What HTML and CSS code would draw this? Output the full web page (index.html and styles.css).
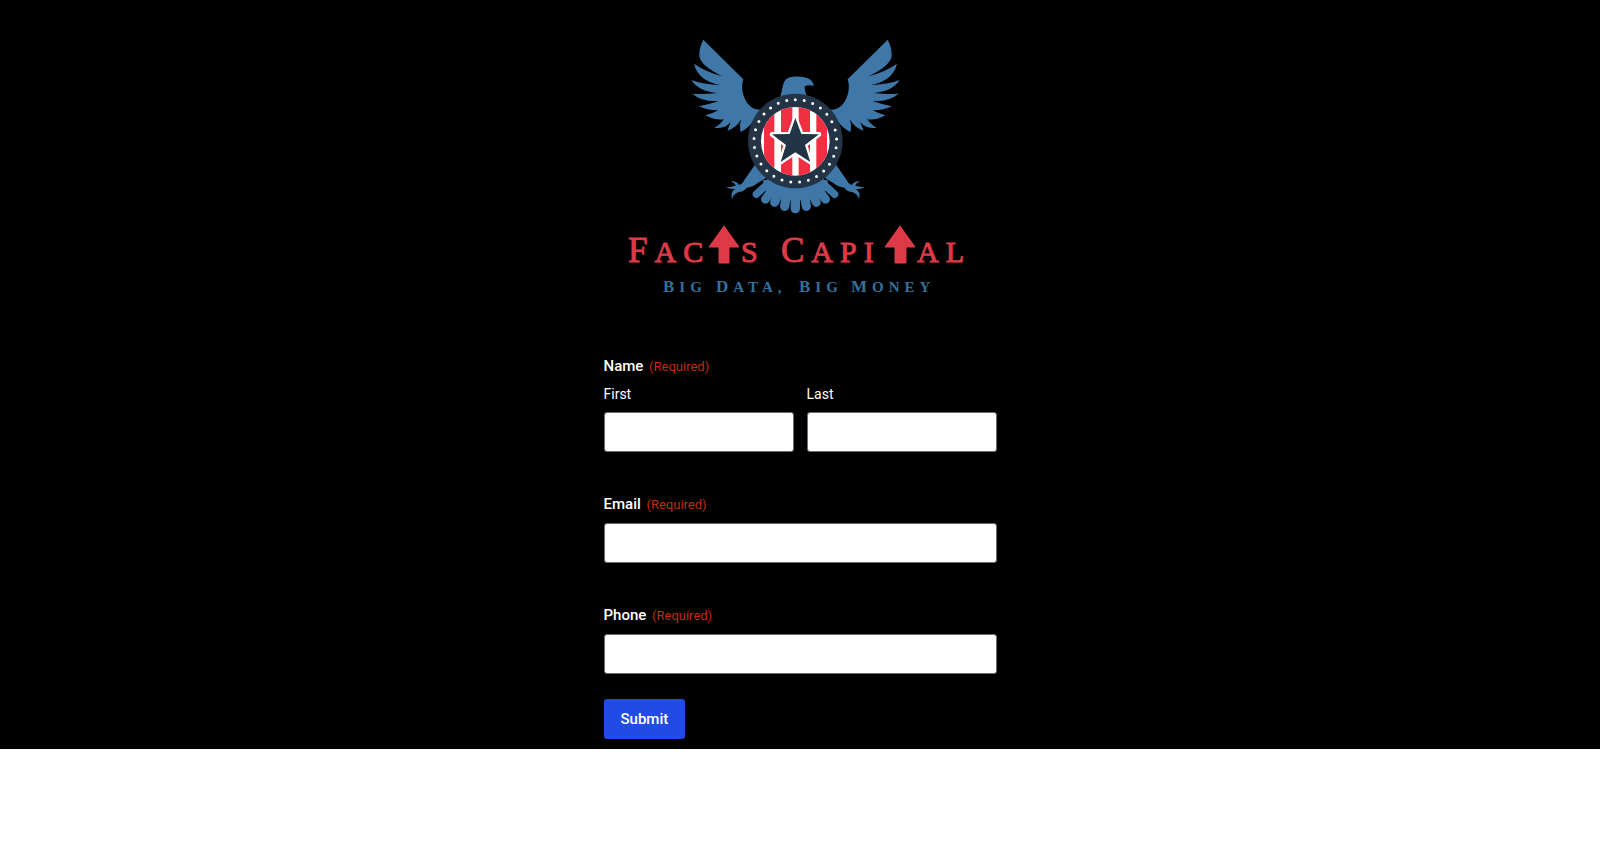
FILE: index.html
```html
<!DOCTYPE html>
<html lang="en">
<head>
<meta charset="utf-8">
<meta name="viewport" content="width=device-width, initial-scale=1">
<title>Facts Capital</title>
<link rel="stylesheet" href="styles.css">
</head>
<body>
<main class="signup">
  <div class="column">
    <svg class="logo" viewBox="604 32 393 268" role="img" aria-label="Facts Capital: Big Data, Big Money">
      <defs>
        <g id="half">
          <path d="M70 29 L190 148 C185 162 185 180 190 194 C197 216 212 240 243 239 L215 280 Q200 298 181 306 Q178 285 183 268 Q172 292 142 302 Q147 290 152 276 Q135 298 103 293 Q121 284 131 268 Q105 272 76 256 Q98 251 115 241 Q85 242 57 229 Q85 224 115 213 Q66 216 37 191 Q75 193 113 189 Q55 184 34 150 Q70 164 120 165 Q54 152 42 101 Q80 127 128 139 Q58 106 58 75 Q58 50 70 29Z"/>
          <path d="M228 400 L193 450 Q188 462 177 465 Q170 452 152 454 Q165 459 167 467 Q154 471 138 472 Q152 479 167 477 Q150 484 156 507 Q160 492 176 486 Q190 486 200 473 Q222 470 232 460 L264 440Z"/>
          <path d="M250 450 L250 476 L274 496 L302 508 L347 512 V450Z"/>
          <g fill="none" stroke="#3f78a8" stroke-linecap="round">
            <path stroke-width="22" d="M278 448 L229 493"/>
            <path stroke-width="26" d="M296 455 L256 508"/>
            <path stroke-width="27" d="M308 460 L284 517"/>
            <path stroke-width="28" d="M325 460 L314 529"/>
          </g>
        </g>
      </defs>
      <g transform="translate(680 30) scale(.3333)" fill="#3f78a8">
        <use href="#half"/>
        <use href="#half" transform="translate(693) scale(-1 1)"/>
        <path d="M346 460 V536" stroke="#3f78a8" stroke-width="28" stroke-linecap="round"/>
        <path d="M300 205 L310 162 Q314 143 338 140 Q372 137 388 147 Q401 156 401 168 Q386 163 374 169 Q373 184 384 205Z"/>
        <circle cx="346" cy="333" r="142" fill="#243447"/>
        <circle cx="346" cy="333" r="124" fill="none" stroke="#fff" stroke-width="9" stroke-linecap="round" pathLength="29" stroke-dasharray="0 1" transform="rotate(-90 346 333)"/>
        <clipPath id="disc"><circle cx="346" cy="334" r="103"/></clipPath>
        <g clip-path="url(#disc)">
          <path fill="#fff" d="M240 228h212v212H240z"/>
          <path fill="#f12f42" d="M252 228h31v212h-31zM303 228h34v212h-34zM356 228h34v212h-34zM409 228h32v212h-32z"/>
        </g>
        <path fill="#243447" stroke="#fff" stroke-width="14" stroke-linejoin="round" paint-order="stroke" d="M346 264 L364 312 L417 313 L375 345 L391 396 L346 367 L302 396 L318 345 L276 313 L329 312Z"/>
      </g>
      <g class="wordmark">
        <text x="628" y="262">F<tspan class="cap">ac</tspan></text>
        <text x="741" y="262" class="cap">s</text>
        <text x="781" y="262">C<tspan class="cap">api</tspan></text>
        <text x="917" y="262" class="cap">al</text>
        <path d="M724 226 L739 247 H729 V263 H719 V247 H709Z"/>
        <path d="M900 226 L915 247 H906 V263 H895 V247 H885Z"/>
      </g>
      <g class="tagline">
        <text x="663" y="292">B<tspan class="cap">ig</tspan></text>
        <text x="716" y="292">D<tspan class="cap">ata,</tspan></text>
        <text x="799" y="292">B<tspan class="cap">ig</tspan></text>
        <text x="851" y="292">M<tspan class="cap">oney</tspan></text>
      </g>
    </svg>
    <form class="form">
      <fieldset class="field">
        <legend class="label">Name <span class="required">(Required)</span></legend>
        <div class="pair">
          <div class="part"><label class="sublabel" for="first">First</label><input class="input" id="first" type="text" required></div>
          <div class="part"><label class="sublabel" for="last">Last</label><input class="input" id="last" type="text" required></div>
        </div>
      </fieldset>
      <div class="field">
        <label class="label" for="email">Email <span class="required">(Required)</span></label>
        <input class="input" id="email" type="email" required>
      </div>
      <div class="field">
        <label class="label" for="phone">Phone <span class="required">(Required)</span></label>
        <input class="input" id="phone" type="tel" required>
      </div>
      <button class="submit" type="submit">Submit</button>
    </form>
  </div>
</main>
</body>
</html>
```
FILE: styles.css
```css
* { box-sizing: border-box; }

body {
  margin: 0;
  background: #fff;
  color: #fff;
  font-family: Roboto, "Liberation Sans", sans-serif;
}

.signup {
  display: flex;
  justify-content: center;
  padding: 32px 16px 10px;
  background: #000;
}

.column {
  width: 100%;
  max-width: 393px;
}

.logo {
  display: block;
  width: 100%;
}

.wordmark,
.tagline {
  font-family: "Liberation Serif", serif;
  text-transform: uppercase;
}

.wordmark {
  fill: #dc3a46;
  stroke: #dc3a46;
  stroke-width: 1px;
  font-size: 35px;
  letter-spacing: 7px;
}

.wordmark .cap { font-size: 30px; }

.tagline {
  fill: #33709f;
  font-size: 17px;
  font-weight: 700;
  letter-spacing: 5px;
}

.tagline .cap { font-size: 15px; }

.form { padding-top: 55px; }

.field {
  margin: 0 0 41px;
  padding: 0;
  border: 0;
}

.field:has(+ .submit) { margin-bottom: 25px; }

.label {
  display: block;
  padding: 0;
  margin-bottom: 7px;
  font-size: 15px;
  font-weight: 500;
  line-height: 22px;
}

.required {
  margin-left: 2px;
  color: #c02b0a;
  font-size: 13px;
  font-weight: 400;
}

.pair {
  display: grid;
  grid-template-columns: 1fr 1fr;
  gap: 13px;
}

.sublabel {
  display: block;
  margin-bottom: 9px;
  font-size: 14px;
  line-height: 18px;
}

.input {
  display: block;
  width: 100%;
  height: 40px;
  padding: 0 12px;
  border: 1px solid #686e77;
  border-radius: 3px;
  background: #fff;
  font: inherit;
}

.submit {
  display: block;
  height: 40px;
  padding: 0 17px;
  border: 0;
  border-radius: 3px;
  background: #204ce5;
  color: #fff;
  font: 500 15px/20px Roboto, "Liberation Sans", sans-serif;
}
```
